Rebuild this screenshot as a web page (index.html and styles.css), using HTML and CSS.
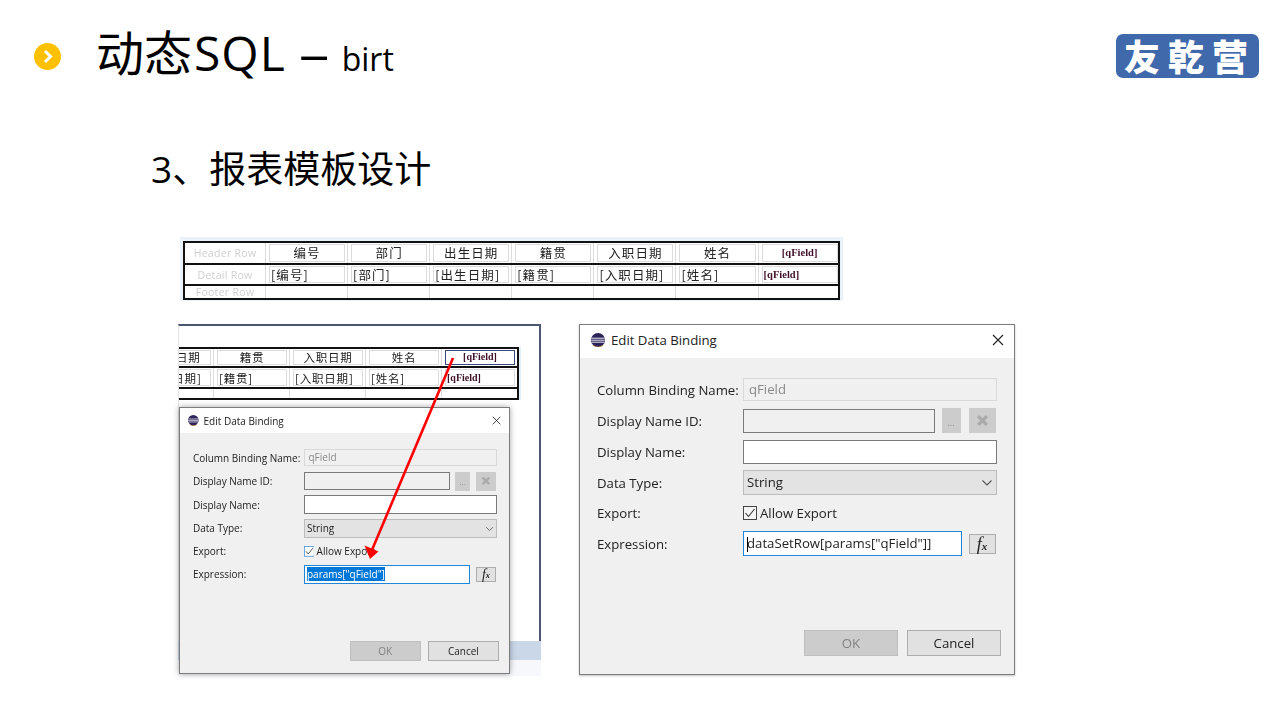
FILE: index.html
```html
<!DOCTYPE html>
<html lang="zh">
<head>
<meta charset="utf-8">
<title>动态SQL - birt</title>
<link rel="stylesheet" href="styles.css">
</head>
<body>
<div class="slide">
  <header class="head">
    <svg class="bullet" viewBox="0 0 27 27"><circle cx="13.5" cy="13.5" r="13.5" fill="#ffc000"/><path d="M11 8l5.5 5.5L11 19" fill="none" stroke="#fff" stroke-width="3"/></svg>
    <h1 class="title">动态<span class="title-sql">SQL</span> <span class="title-dash">–</span> <span class="title-sm">birt</span></h1>
    <div class="logo">友乾营</div>
  </header>
  <h2 class="sub">3、报表模板设计</h2>

  <div class="design shot">
    <div class="rt rt-lg">
      <div class="rt-row rt-h">
        <div class="rt-lab">Header Row</div>
        <div class="rt-cell"><span class="box center">编号</span></div>
        <div class="rt-cell"><span class="box center">部门</span></div>
        <div class="rt-cell"><span class="box center">出生日期</span></div>
        <div class="rt-cell"><span class="box center">籍贯</span></div>
        <div class="rt-cell"><span class="box center">入职日期</span></div>
        <div class="rt-cell"><span class="box center">姓名</span></div>
        <div class="rt-cell"><span class="box center q">[qField]</span></div>
      </div>
      <div class="rt-row rt-d">
        <div class="rt-lab">Detail Row</div>
        <div class="rt-cell"><span class="box">[编号]</span></div>
        <div class="rt-cell"><span class="box">[部门]</span></div>
        <div class="rt-cell"><span class="box">[出生日期]</span></div>
        <div class="rt-cell"><span class="box">[籍贯]</span></div>
        <div class="rt-cell"><span class="box">[入职日期]</span></div>
        <div class="rt-cell"><span class="box">[姓名]</span></div>
        <div class="rt-cell"><span class="box q">[qField]</span></div>
      </div>
      <div class="rt-row rt-f">
        <div class="rt-lab">Footer Row</div>
        <div class="rt-cell"></div><div class="rt-cell"></div><div class="rt-cell"></div><div class="rt-cell"></div><div class="rt-cell"></div><div class="rt-cell"></div><div class="rt-cell"></div>
      </div>
    </div>
  </div>

  <div class="shots">
    <div class="window shot">
      <div class="win-frame">
        <div class="rt rt-sm">
          <div class="rt-row rt-h">
            <div class="rt-cell"><span class="box center">出生日期</span></div>
            <div class="rt-cell"><span class="box center">籍贯</span></div>
            <div class="rt-cell"><span class="box center">入职日期</span></div>
            <div class="rt-cell"><span class="box center">姓名</span></div>
            <div class="rt-cell"><span class="box center q sel">[qField]</span></div>
          </div>
          <div class="rt-row rt-d">
            <div class="rt-cell"><span class="box">[出生日期]</span></div>
            <div class="rt-cell"><span class="box">[籍贯]</span></div>
            <div class="rt-cell"><span class="box">[入职日期]</span></div>
            <div class="rt-cell"><span class="box">[姓名]</span></div>
            <div class="rt-cell"><span class="box q">[qField]</span></div>
          </div>
          <div class="rt-row rt-f">
            <div class="rt-cell"></div><div class="rt-cell"></div><div class="rt-cell"></div><div class="rt-cell"></div><div class="rt-cell"></div>
          </div>
        </div>
      </div>
      <div class="win-strip"></div>

      <div class="dlg dlg-sm">
        <div class="dlg-title">
          <svg class="eclipse" viewBox="0 0 14 14"><circle cx="7" cy="7" r="7" fill="#2c2458"/><path d="M0.5 5.2h13M0.3 7.2h13.4M0.8 9.2h12.4" stroke="#e8e8f2" stroke-width="1"/><path d="M2 12.2A7 7 0 0 0 12 12.2" fill="none" stroke="#d98a2b" stroke-width=".8"/></svg>
          <span class="dlg-name">Edit Data Binding</span>
          <svg class="close" viewBox="0 0 12 12"><path d="M1 1l10 10M11 1L1 11" stroke="#222" stroke-width="1.1" fill="none"/></svg>
        </div>
        <div class="form">
          <span class="lbl">Column Binding Name:</span>
          <div class="fld fld-off short">qField</div>
          <span class="lbl">Display Name ID:</span>
          <div class="fld-row">
            <div class="fld fld-ro grow"></div>
            <div class="mini">...</div>
            <div class="mini mini-x"><svg class="x-ico" viewBox="0 0 12 12"><path d="M2 2l8 8M10 2l-8 8" stroke="#aaa" stroke-width="3" fill="none"/></svg></div>
          </div>
          <span class="lbl">Display Name:</span>
          <div class="fld fld-on"></div>
          <span class="lbl">Data Type:</span>
          <div class="fld fld-sel">String<svg class="chev" viewBox="0 0 12 8"><path d="M1.5 1.5L6 6l4.5-4.5" fill="none" stroke="#555" stroke-width="1.1"/></svg></div>
          <span class="lbl">Export:</span>
          <div class="chk-row">
            <svg class="chk" viewBox="0 0 14 14"><rect x=".5" y=".5" width="13" height="13" fill="#fff" stroke="#3d8fd6"/><path d="M2.5 7l3 3.5 6-7.5" fill="none" stroke="#333" stroke-width="1.1"/></svg>
            <span>Allow Export</span>
          </div>
          <span class="lbl">Expression:</span>
          <div class="fld-row">
            <div class="fld fld-act grow"><span class="selected">params["qField"]</span></div>
            <div class="fx"><i>f</i><i class="fx-x">x</i></div>
          </div>
        </div>
        <div class="acts">
          <div class="btn btn-off">OK</div>
          <div class="btn">Cancel</div>
        </div>
      </div>

      <svg class="arrow" viewBox="0 0 363 352"><path d="M275 34L194 226" stroke="#f00" stroke-width="2.6" fill="none"/><path d="M192 235L186.5 221.5L200.5 227.5Z" fill="#f00"/></svg>
    </div>

    <div class="dlg dlg-lg shot">
      <div class="dlg-title">
        <svg class="eclipse" viewBox="0 0 14 14"><circle cx="7" cy="7" r="7" fill="#2c2458"/><path d="M0.5 5.2h13M0.3 7.2h13.4M0.8 9.2h12.4" stroke="#e8e8f2" stroke-width="1"/><path d="M2 12.2A7 7 0 0 0 12 12.2" fill="none" stroke="#d98a2b" stroke-width=".8"/></svg>
        <span class="dlg-name">Edit Data Binding</span>
        <svg class="close" viewBox="0 0 12 12"><path d="M1 1l10 10M11 1L1 11" stroke="#222" stroke-width="1.1" fill="none"/></svg>
      </div>
      <div class="form">
        <span class="lbl">Column Binding Name:</span>
        <div class="fld fld-off short">qField</div>
        <span class="lbl">Display Name ID:</span>
        <div class="fld-row">
          <div class="fld fld-ro grow"></div>
          <div class="mini">...</div>
          <div class="mini mini-x"><svg class="x-ico" viewBox="0 0 12 12"><path d="M2 2l8 8M10 2l-8 8" stroke="#aaa" stroke-width="3" fill="none"/></svg></div>
        </div>
        <span class="lbl">Display Name:</span>
        <div class="fld fld-on"></div>
        <span class="lbl">Data Type:</span>
        <div class="fld fld-sel">String<svg class="chev" viewBox="0 0 12 8"><path d="M1.5 1.5L6 6l4.5-4.5" fill="none" stroke="#555" stroke-width="1.1"/></svg></div>
        <span class="lbl">Export:</span>
        <div class="chk-row">
          <svg class="chk" viewBox="0 0 14 14"><rect x=".5" y=".5" width="13" height="13" fill="#f4f4f4" stroke="#444"/><path d="M2.5 7l3 3.5 6-7.5" fill="none" stroke="#333" stroke-width="1.1"/></svg>
          <span>Allow Export</span>
        </div>
        <span class="lbl">Expression:</span>
        <div class="fld-row">
          <div class="fld fld-act grow"><span class="caret"></span>dataSetRow[params["qField"]]</div>
          <div class="fx"><i>f</i><i class="fx-x">x</i></div>
        </div>
      </div>
      <div class="acts">
        <div class="btn btn-off">OK</div>
        <div class="btn">Cancel</div>
      </div>
    </div>
  </div>
</div>
</body>
</html>
```
FILE: styles.css
```css
* { box-sizing: border-box; }
html, body { margin: 0; padding: 0; background: #fff; }
body { font-family: "Open Sans", "Noto Sans CJK SC", sans-serif; }

.slide { width: 1280px; height: 720px; overflow: hidden; background: #fff; color: #000; }

/* header */
.head { height: 112px; padding: 0 21px 0 34px; display: flex; align-items: center; }
.bullet { width: 27px; height: 27px; flex: none; }
.title { margin: 0 0 0 35px; font-size: 48px; line-height: 60px; font-weight: 400; white-space: pre; font-family: "Open Sans", "Noto Sans CJK SC", sans-serif; }
.title-sql { margin-left: 2px; letter-spacing: 1px; }
.title-dash { display: inline-block; margin: 0 3px 0 4px; transform: scaleX(1.28); }
.title-sm { font-size: 32px; }
.logo { margin-left: auto; width: 143px; height: 44px; border-radius: 7px; background: #3f69ab; color: #fff; font-family: "Noto Sans CJK SC", sans-serif; font-weight: 900; font-size: 36px; line-height: 42px; letter-spacing: 8px; padding-left: 8px; white-space: nowrap; }

.sub { margin: 32px 0 0 151px; font-size: 37px; line-height: 50px; font-weight: 400; }

.shot { filter: blur(.3px); }

/* report table */
.design { margin: 43px 0 0 180px; width: 663px; height: 64px; padding: 4px 3px 0; background: #eaf1f8; }
.rt { border: 2px solid #111; background: #fff; font-family: "Noto Sans CJK SC", sans-serif; color: #222; }
.rt-row { display: flex; overflow: hidden; }
.rt-row + .rt-row { border-top: 2px solid #111; }
.rt-lab { flex: none; width: 80px; text-align: center; font-family: "Open Sans", sans-serif; color: #cfcfcf; font-size: 10.5px; letter-spacing: .3px; align-self: center; white-space: nowrap; }
.rt-cell { flex: none; width: var(--col); border-left: 1px solid #ddd; padding: 1px 2px 1px 3px; display: flex; }
.box { flex: 1; min-width: 0; border: 1px solid #ddd; white-space: nowrap; padding-left: 1px; display: block; }
.center { text-align: center; padding-left: 0; }
.q { font-family: "Liberation Serif", serif; font-weight: 700; color: #40102a; }
.sel { border-color: #39487c; }

.rt-lg { --col: 82.1px; width: 657px; font-size: 12.5px; letter-spacing: 1.1px; }
.rt-lg .q { font-size: 10.5px; letter-spacing: 0; }
.rt-lg .rt-h { height: 20px; line-height: 15px; }
.rt-lg .rt-d { height: 21px; line-height: 16px; }
.rt-lg .rt-f { height: 14px; line-height: 13px; }
.rt-lg .rt-f .rt-lab { align-self: flex-start; }

.rt-sm { --col: 76px; width: 340px; border-left: 0; font-size: 11.5px; letter-spacing: .8px; box-shadow: 2px 0 0 #e4eef7; }
.rt-sm .rt-row { justify-content: flex-end; }
.rt-sm .q { font-size: 10px; letter-spacing: 0; }
.rt-sm .rt-h { height: 17px; line-height: 12px; }
.rt-sm .rt-d { height: 21px; line-height: 16px; }
.rt-sm .rt-f { height: 11px; }

/* window behind the small dialog */
.shots { margin: 23px 0 0 178px; display: flex; gap: 38px; align-items: flex-start; }
.window { position: relative; flex: none; width: 363px; height: 352px; background: #f6f8fb; }
.win-frame { height: 317px; padding-top: 21px; background: #fff; border-top: 2px solid #4c5672; border-right: 2px solid #4c5672; border-left: 1px solid #e3e3e3; }
.win-strip { height: 19px; background: #c9d7e8; }

/* dialog, every measure scales with --u */
.dlg { display: flex; flex-direction: column; flex: none; width: calc(436 * var(--u)); height: calc(351 * var(--u)); background: #f0f0f0; border: 1px solid #7c7c7c; color: #222; font-size: calc(13.2 * var(--u)); }
.dlg-lg { --u: 1px; box-shadow: 0 1px 2px rgba(0,0,0,.25); }
.dlg-sm { --u: .759px; position: absolute; left: 1px; top: 83px; height: 267px; box-shadow: 0 0 6px rgba(0,0,0,.35); }
.dlg-sm .dlg-title { padding-bottom: 0; }
.dlg-sm .form { padding-top: 15px; padding-right: 12px; }
.dlg-sm .acts { padding-bottom: 12px; }

.dlg-title { flex: none; height: calc(33 * var(--u)); background: #fff; display: flex; align-items: center; padding: 0 calc(10 * var(--u)) calc(3 * var(--u)) calc(11 * var(--u)); font-size: calc(13.2 * var(--u)); }
.eclipse { width: calc(14 * var(--u)); height: calc(14 * var(--u)); flex: none; margin-right: calc(6 * var(--u)); }
.dlg-name { flex: 1; }
.close { width: calc(12 * var(--u)); height: calc(12 * var(--u)); flex: none; }

.form { flex: none; padding: calc(19 * var(--u)) calc(17.5 * var(--u)) 0 calc(17 * var(--u)); display: grid; grid-template-columns: calc(146 * var(--u)) 1fr; grid-template-rows: repeat(4, calc(25 * var(--u))) calc(24 * var(--u)) calc(25 * var(--u)); row-gap: calc(6 * var(--u)); align-items: center; }
.lbl { white-space: nowrap; }

.fld { height: calc(25 * var(--u)); line-height: calc(23 * var(--u)); padding-left: calc(3 * var(--u)); border: 1px solid #7a7a7a; white-space: nowrap; }
.short { height: calc(23 * var(--u)); line-height: calc(21 * var(--u)); }
.fld-off { background: #f0f0f0; border-color: #d9d9d9; color: #8a8a8a; padding-left: calc(5 * var(--u)); }
.fld-ro { background: #f0f0f0; height: calc(24 * var(--u)); }
.fld-on { background: #fff; height: calc(24 * var(--u)); }
.fld-sel { position: relative; background: #e3e3e3; border-color: #bcbcbc; }
.chev { position: absolute; right: calc(3 * var(--u)); top: calc(8 * var(--u)); width: calc(12 * var(--u)); height: calc(8 * var(--u)); }
.fld-act { background: #fff; border-color: #1f86dc; color: #222; }
.fld-row { display: flex; align-items: center; gap: calc(7 * var(--u)); }
.grow { flex: 1; min-width: 0; }

.mini { flex: none; width: calc(19 * var(--u)); height: calc(25 * var(--u)); background: #ccc; color: #888; font-size: calc(9 * var(--u)); line-height: calc(29 * var(--u)); text-align: center; }
.mini-x { width: calc(27 * var(--u)); margin: 0 calc(1 * var(--u)); display: flex; align-items: center; justify-content: center; }
.x-ico { width: calc(13 * var(--u)); height: calc(13 * var(--u)); }

.chk-row { display: flex; align-items: center; gap: calc(3 * var(--u)); white-space: nowrap; }
.chk { width: calc(14 * var(--u)); height: calc(14 * var(--u)); flex: none; }

.fx { flex: none; width: calc(27 * var(--u)); height: calc(20 * var(--u)); margin-right: calc(1 * var(--u)); background: #e1e1e1; border: 1px solid #adadad; display: flex; justify-content: center; align-items: center; font-family: "Liberation Serif", serif; color: #222; font-size: calc(18 * var(--u)); line-height: 1; }
.fx-x { font-size: calc(11 * var(--u)); margin-top: calc(6 * var(--u)); font-weight: 700; }

.selected { background: #0078d7; color: #fff; }
.caret { display: inline-block; width: 1px; height: calc(15 * var(--u)); margin-right: -1px; background: #000; vertical-align: middle; }

.acts { flex: none; margin-top: auto; display: flex; justify-content: flex-end; gap: calc(9 * var(--u)); padding: 0 calc(13 * var(--u)) calc(18 * var(--u)); }
.btn { width: calc(94 * var(--u)); height: calc(26 * var(--u)); line-height: calc(24 * var(--u)); border: 1px solid #adadad; background: #e1e1e1; text-align: center; color: #222; }
.btn-off { background: #ccc; border-color: #bfbfbf; color: #838383; }

.arrow { position: absolute; left: 0; top: 0; width: 363px; height: 352px; }
```
